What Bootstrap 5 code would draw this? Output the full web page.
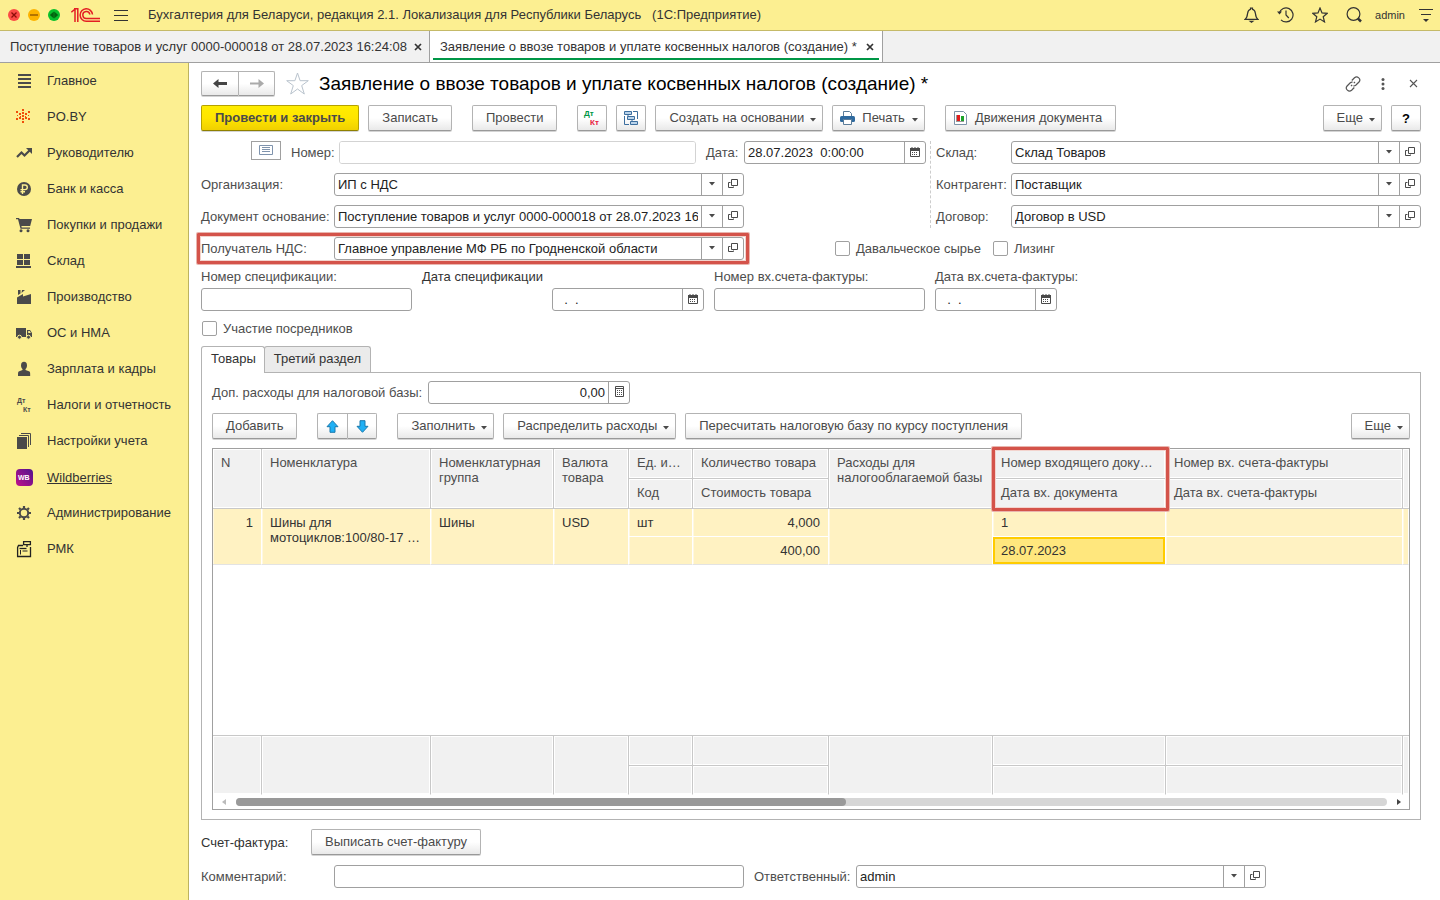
<!DOCTYPE html>
<html lang="ru">
<head>
<meta charset="utf-8">
<meta name="viewport" content="width=device-width, initial-scale=1">
<title>Заявление о ввозе товаров и уплате косвенных налогов</title>
<link href="https://cdn.jsdelivr.net/npm/bootstrap@5.3.0/dist/css/bootstrap.min.css" rel="stylesheet">
<style>
  body { font: 13px/15px "Liberation Sans", Arial, sans-serif; color: #333; background: #fff; }
  button, input { font: inherit; color: inherit; }
  svg { display: block; flex: none; }

  .topbar { height: 31px; background: #fcef91; border-bottom: 1px solid #c5ba68; padding: 0 7px 0 8px; }
  .topbar button, .plain { border: 0; background: none; padding: 0; color: #333; }
  .brand { margin: 0 14px 0 11px; }
  .apptitle { padding: 0 0 2px 20px; }
  .account { font-size: 11px; color: #333; text-decoration: none; margin: 0 14px 0 13px; }
  .wintabs { height: 32px; background: #f1f1f1; border-bottom: 1px solid #a0a0a0; }
  .wintab { height: 31px; padding: 0 7px 0 10px; border-right: 1px solid #a0a0a0; gap: 7px; }
  .wintab a { color: #333; text-decoration: none; }
  .wintab.current { background: #fff; position: relative; padding-right: 8px; gap: 9px; }
  .wintab.current::after { content: ""; position: absolute; left: 3px; right: 3px; bottom: 2px; height: 2px; background: #009646; }

  .sidebar { width: 189px; flex: none; background: #fcef91; border-right: 1px solid #bdb35f; }
  .sidebar a { height: 36px; padding-left: 15px; gap: 14px; color: #333; text-decoration: none; }
  .sidebar a svg { color: #4a4a4a; width: 18px; height: 18px; }
  .sidebar a span { padding-bottom: 2px; }
  .sidebar a.hovered span { text-decoration: underline; padding-bottom: 0; }

  .workarea { padding: 8px 19px 12px 12px; min-width: 0; }
  h1 { font-size: 19px; line-height: 25px; color: #000; font-weight: 400; margin: 0; }
  .star { margin: 0 10px 0 11px; }
  .wintools { gap: 20px; padding-right: 3px; }

  .cmd { height: 26px; padding: 0 13px 2px; border: 1px solid #b3b3b3; border-bottom-color: #999; border-radius: 2px;
         background: linear-gradient(#fff 50%, #e9e9e9); box-shadow: 0 1px 0 #d4d4d4; color: #4a4a4a;
         font-size: 13px; line-height: 15px; display: inline-flex; align-items: center; justify-content: center; gap: 6px; white-space: nowrap; }
  .cmd:hover { border-color: #999; color: #333; }
  .cmd.main-cmd { background: linear-gradient(#ffed00, #ffe500 50%, #f0d000); border-color: #b5a100; border-bottom-color: #8f8000; font-weight: 700; }
  .cmd.dropdown-cmd { padding-right: 6px; }
  .cmd .drop { margin-top: 6px; }
  .cmd.square { width: 30px; padding: 0; }
  .cmd.with-icon { padding-left: 7px; gap: 7px; }
  .cmd.with-icon svg:first-child { margin-top: 2px; }
  .cmd.pair-l { border-radius: 2px 0 0 2px; border-right: 0; }
  .cmd.pair-r { border-radius: 0 2px 2px 0; }
  .tools { gap: 9px; margin-top: 9px; }
  .apart { margin-left: 11px; }
  .navpair .cmd { height: 25px; width: 37px; padding: 0; }

  .lbl { color: #4d4d4d; white-space: nowrap; }
  .lbl.strong-ink { color: #333; }
  .fld { display: flex; height: 23px; border: 1px solid #a0a0a0; border-radius: 3px; background: #fff; overflow: hidden; min-width: 0; }
  .fld input { flex: 1; min-width: 0; width: 0; border: 0; padding: 0 3px; background: none; outline: 0; color: #222; white-space: pre; }
  .fld input:disabled { background: #fff; }
  .fld.off { border-color: #d3d3d3; }
  .fld button { width: 21px; flex: none; border: 0; border-left: 1px solid #a0a0a0; background: none; padding: 0 0 1px; color: #4a4a4a; display: flex; align-items: center; justify-content: center; }
  .fld:focus-within { border-color: #808080; }

  .header-grid { display: grid; grid-template-columns: 133px minmax(0,410fr) minmax(0,182fr) 10px 75px minmax(0,410fr); grid-auto-rows: 23px; row-gap: 9px; align-items: center; margin-top: 10px; position: relative; }
  .header-grid .number-part { grid-column: 1 / 3; padding-left: 50px; }
  .number-part .lbl { padding-left: 10px; width: 48px; }
  .number-part .listbtn + .lbl { width: 58px; }
  .header-grid .divider { grid-area: 1 / 4 / 4 / 5; align-self: stretch; margin-left: 4px; border-left: 1px dashed #ccc; }
  .header-grid .checks { grid-column: 3 / 7; padding-left: 91px; gap: 12px; }
  .r1c5 { grid-area: 1 / 5; } .r1c6 { grid-area: 1 / 6; }
  .r2c1 { grid-area: 2 / 1; } .r2c2 { grid-area: 2 / 2; } .r2c5 { grid-area: 2 / 5; } .r2c6 { grid-area: 2 / 6; }
  .r3c1 { grid-area: 3 / 1; } .r3c2 { grid-area: 3 / 2; } .r3c5 { grid-area: 3 / 5; } .r3c6 { grid-area: 3 / 6; }
  .r4c1 { grid-area: 4 / 1; } .r4c2 { grid-area: 4 / 2; }
  .listbtn { width: 30px; height: 19px; border: 1px solid #a0a0a0; background: #fff; padding: 0 0 1px; display: flex; align-items: center; justify-content: center; margin-bottom: 4px; }
  .frame { position: absolute; border: 3px solid #d4534a; box-shadow: 0 0 0 1px #e9b5ae, inset 0 0 0 1px #f3d3cd; pointer-events: none; border-radius: 1px; }
  .frame.row-frame { grid-area: 4 / 1 / 5 / 3; inset: -4px -5px -4px -4px; }
  .frame.head-frame { top: -2px; left: -1px; right: -4px; height: 64px; z-index: 2; }

  .tick { gap: 6px; color: #4d4d4d; }
  .tick .form-check-input { width: 15px; height: 15px; margin: 0; border: 1px solid #a0a0a0; border-radius: 2px; }
  .tick.mediator { margin: 10px 0 0 1px; }

  .spec-grid { display: grid; grid-template-columns: minmax(0,211fr) minmax(0,282fr) minmax(0,211fr) minmax(0,122fr) minmax(0,354fr); column-gap: 10px; margin-top: 9px; }
  .spec-grid label { line-height: 16px; margin-bottom: 3px; display: block; }
  .spec-grid .spec-date { width: 152px; margin-left: auto; }

  .pagetabs { margin-top: 10px; border: 0; }
  .pagetabs .nav-link { height: 26px; padding: 0 9px 2px; border: 1px solid #b3b3b3; border-bottom: 0; border-radius: 3px 3px 0 0; color: #333; background: #ebebeb; margin: 0 0 0 -1px; }
  .pagetabs .nav-link.active { background: #fff; color: #333; height: 27px; margin: 0 0 -1px; position: relative; padding: 0 8px 3px 9px; border-color: #b3b3b3; }
  .pagebox { border: 1px solid #b3b3b3; padding: 8px 10px 9px; }
  .extra-lbl { width: 216px; }
  .extra-fld { width: 202px; }

  .gridbox { border: 1px solid #a0a0a0; margin-top: 9px; min-height: 200px; }
  .gridbox table { table-layout: fixed; width: 100%; border-collapse: separate; border-spacing: 0; }
  .gridbox th, .gridbox td { vertical-align: top; padding: 6px 8px 0; font-weight: 400; }
  .gridbox th, .totals td { background: #f1f1f1; color: #4d4d4d; border-right: 1px solid #c8c8c8; border-bottom: 1px solid #c8c8c8; box-shadow: inset 0 0 0 1px #fff; height: 30px; }
  .gridbox tbody.rows td { background: #fff2c2; border-right: 1px solid #fff; border-bottom: 1px solid #fff; height: 28px; box-shadow: inset 1px 0 0 #fff8e0; }
  .gridbox tbody.rows td.low { border-bottom-color: #e3e3e3; }
  .gridbox tr > .edge { border-right: 0; padding: 0; }
  .gridbox tbody.rows td.focused { background: #ffe77d; box-shadow: inset 0 0 0 2px #fc0; }
  .w-n { width: 49px; } .w-item { width: 169px; } .w-group { width: 123px; } .w-cur { width: 75px; } .w-unit { width: 64px; }
  .w-qty { width: 136px; } .w-exp { width: 164px; } .w-in { width: 173px; } .w-inv { width: 237px; }
  .totals { border-top: 1px solid #c8c8c8; }
  .totals td.low { border-bottom-color: #fff; height: 29px; }
  .hbar { height: 14px; padding: 0 8px 0 9px; gap: 10px; }
  .hbar .track { height: 8px; border-radius: 4px; background: #d6d6d6; }
  .hbar .thumb { height: 8px; border-radius: 4px; background: #999; width: 53%; }

  .invoice-row { margin-top: 9px; }
  .invoice-row .lbl { width: 110px; }
  .foot-grid { display: grid; grid-template-columns: 133px minmax(0,410fr) 112px minmax(0,410fr) minmax(0,155fr); align-items: center; margin-top: 10px; }
  .resp-lbl { padding-left: 10px; }
</style>
</head>
<body class="d-flex flex-column min-vh-100">

<svg width="0" height="0" class="position-absolute" aria-hidden="true">
  <symbol id="i-caret" viewBox="0 0 6 4"><path d="M0 0h6L3 3.5z" fill="currentColor"/></symbol>
  <symbol id="i-open" viewBox="0 0 10 10"><path d="M3.500.5h6v6h-6zM2.500 3.500H.5v5h5V7.500" fill="none" stroke="currentColor"/></symbol>
  <symbol id="i-cal" viewBox="0 0 10 10"><path d="M.5 2h9v7.500h-9z" fill="none" stroke="currentColor"/><path d="M0 1h10v3H0zM1.500 0h1v1h-1zM4.500 0h1v1h-1zM7.500 0h1v1h-1zM2 5h1v1H2zM4 5h1v1H4zM6 5h1v1H6zM2 7h1v1H2zM4 7h1v1H4zM6 7h1v1H6z" fill="currentColor"/></symbol>
  <symbol id="i-calc" viewBox="0 0 9 12"><path d="M.5.5h8v10h-8zM0 2.500h9" fill="none" stroke="currentColor"/><path d="M2 4h1v1H2zM4 4h1v1H4zM6 4h1v1H6zM2 6h1v1H2zM4 6h1v1H4zM6 6h1v1H6zM2 8h1v1H2zM4 8h1v1H4zM6 8h1v1H6z" fill="currentColor"/></symbol>
  <symbol id="i-x" viewBox="0 0 8 8"><path d="M1 1l6 6M7 1L1 7" stroke="currentColor" stroke-width="1.700"/></symbol>
</svg>

<header class="topbar d-flex align-items-center">
  <svg width="52" height="12" viewBox="0 0 52 12">
    <circle cx="6" cy="6" r="6" fill="#fb4b46"/><path d="M3.500 3.500l5 5M8.500 3.500l-5 5" stroke="#8c0d0a" stroke-width="1.300"/>
    <circle cx="26" cy="6" r="6" fill="#fdb300"/><path d="M22 6h8" stroke="#a06400" stroke-width="1.600"/>
    <circle cx="46" cy="6" r="6" fill="#08c02c"/><path d="M45.800 2.500v7L41.800 6zM46.200 2.500L50.200 6l-4 3.500z" fill="#03630f"/>
  </svg>
  <svg class="brand" width="29" height="15" viewBox="0 0 29 15" fill="none" stroke="#e31e24" stroke-width="1.500">
    <path d="M.3 4.200L4 1.200v12.700M3 .8h3.800v13.100"/>
    <path d="M21.500 6.500A6.200 6.200 0 1 0 15.300 13.200H29M18.800 6.500A3.500 3.500 0 1 0 15.500 10.500H29"/>
  </svg>
  <button type="button" aria-label="Меню"><svg width="14" height="13" viewBox="0 0 14 13" stroke="#333"><path d="M0 1.500h14M0 6.500h14M0 11.500h14"/></svg></button>
  <div class="apptitle flex-grow-1 text-nowrap">Бухгалтерия для Беларуси, редакция 2.1. Локализация для Республики Беларусь&nbsp;&nbsp; (1С:Предприятие)</div>
  <div class="d-flex align-items-center" style="gap:18px">
    <button type="button" aria-label="Оповещения"><svg width="15" height="16" viewBox="0 0 15 16" fill="none" stroke="#333" stroke-width="1.200"><path d="M1 12.400c2-1.500 2.300-3 2.600-6C3.900 3.800 5 2.600 6.500 2.300V1.200h2v1.100c1.500.3 2.600 1.500 2.900 4.100.3 3 .6 4.500 2.600 6z"/><path d="M4.500 13.800h6L7.500 16z" fill="#333" stroke="none"/></svg></button>
    <button type="button" aria-label="История"><svg width="17" height="16" viewBox="0 0 17 16" fill="none" stroke="#333" stroke-width="1.200"><path d="M2.300 6A7 7 0 1 1 4 12.800M9 3.500V8l2.800 3"/><path d="M0 4.500h5L2.500 7.500z" fill="#333" stroke="none"/></svg></button>
    <button type="button" aria-label="Избранное"><svg width="16" height="16" viewBox="0 0 16 16" fill="none" stroke="#333" stroke-width="1.200"><path d="M8 1l2 4.900 5.200.4-4 3.400 1.300 5.200L8 12.100l-4.500 2.800 1.300-5.200-4-3.400L6 5.900z"/></svg></button>
    <button type="button" aria-label="Поиск"><svg width="16" height="16" viewBox="0 0 16 16" fill="none" stroke="#333"><circle cx="7.500" cy="7" r="6.400" stroke-width="1.200"/><path d="M11.800 11.300l3.200 3.200" stroke-width="2.500"/></svg></button>
  </div>
  <a class="account" href="#">admin</a>
  <button type="button" aria-label="Настройка"><svg width="14" height="14" viewBox="0 0 14 14"><path d="M0 1.500h14M2 6.500h10" stroke="#333"/><path d="M4 11h6L7 14z" fill="#333"/></svg></button>
</header>

<nav class="wintabs d-flex">
  <div class="wintab d-flex align-items-center"><a href="#">Поступление товаров и услуг 0000-000018 от 28.07.2023 16:24:08</a><button class="plain" type="button" aria-label="Закрыть"><svg width="8" height="8"><use href="#i-x"/></svg></button></div>
  <div class="wintab current d-flex align-items-center"><a href="#">Заявление о ввозе товаров и уплате косвенных налогов (создание) *</a><button class="plain" type="button" aria-label="Закрыть"><svg width="8" height="8"><use href="#i-x"/></svg></button></div>
</nav>

<div class="d-flex flex-grow-1">
  <nav class="sidebar d-flex flex-column">
    <a class="d-flex align-items-center" href="#"><svg viewBox="0 0 18 18"><path d="M3 2h13v2H3zM3 6h13v2H3zM3 10h13v2H3zM3 14h13v2H3z" fill="currentColor"/></svg><span>Главное</span></a>
    <a class="d-flex align-items-center" href="#"><svg viewBox="0 0 18 18"><path d="M7 1h2v2H7zM7 4h2v2H7zM7 7h2v2H7zM7 10h2v2H7zM7 13h2v2H7zM1 3h2v2H1zM13 3h2v2h-2zM4 5h2v2H4zM10 5h2v2h-2zM5 8h1v1H5zM10 8h1v1h-1zM2 7h1v1H2zM13 7h1v1h-1zM4 9h2v2H4zM10 9h2v2h-2zM1 10h2v2H1zM13 10h2v2h-2z" fill="#f04e0a"/></svg><span>PO.BY</span></a>
    <a class="d-flex align-items-center" href="#"><svg viewBox="0 0 18 18"><path d="M2 13l4.500-4.500 3 3L15 6" fill="none" stroke="currentColor" stroke-width="2.200"/><path d="M11 4h6v6z" fill="currentColor"/></svg><span>Руководителю</span></a>
    <a class="d-flex align-items-center" href="#"><svg viewBox="0 0 18 18"><circle cx="9" cy="9" r="7" fill="currentColor"/><path d="M7.500 14V5H10a2.300 2.300 0 0 1 0 4.600H5.500M5.500 11.700H10" fill="none" stroke="#fcef91" stroke-width="1.400"/></svg><span>Банк и касса</span></a>
    <a class="d-flex align-items-center" href="#"><svg viewBox="0 0 18 18" fill="currentColor"><path d="M1 2h3l.6 1H17l-1.800 7H6.400l.3 1.500H15v1.300H5.500L3 3.300H1z"/><circle cx="6" cy="14.700" r="1.500"/><circle cx="13" cy="14.700" r="1.500"/></svg><span>Покупки и продажи</span></a>
    <a class="d-flex align-items-center" href="#"><svg viewBox="0 0 18 18"><path d="M2 2h6v5H2zM9 2h6v5H9zM2 8h6v5H2zM9 8h6v5H9zM1 14h15v2H1z" fill="currentColor"/></svg><span>Склад</span></a>
    <a class="d-flex align-items-center" href="#"><svg viewBox="0 0 18 18"><path d="M2 16V9.500l6-3.500v2.500L16 6v10zM3 2h2.500v3.500L3 7zM7 2h3L6.500 5z" fill="currentColor"/></svg><span>Производство</span></a>
    <a class="d-flex align-items-center" href="#"><svg viewBox="0 0 18 18"><path d="M1 4h10v9H1zM12 6h3l2 3v4h-5z" fill="currentColor"/><path d="M13.200 7h1.500l1.200 2h-2.700z" fill="#fcef91"/><g fill="currentColor" stroke="#fcef91"><circle cx="4.500" cy="13.200" r="2"/><circle cx="13.500" cy="13.200" r="2"/></g></svg><span>ОС и НМА</span></a>
    <a class="d-flex align-items-center" href="#"><svg viewBox="0 0 18 18" fill="currentColor"><ellipse cx="9" cy="5.500" rx="3" ry="3.700"/><path d="M7.500 8h3v2l4 1.500c.7.500.7 2 .7 4.500H3c0-2.500 0-4 .7-4.500l3.800-1.500z"/></svg><span>Зарплата и кадры</span></a>
    <a class="d-flex align-items-center" href="#"><svg viewBox="0 0 18 18" fill="currentColor" font-size="7" font-weight="700"><text x="2" y="7">Дт</text><text x="8" y="16">Кт</text></svg><span>Налоги и отчетность</span></a>
    <a class="d-flex align-items-center" href="#"><svg viewBox="0 0 18 18"><path d="M2 5h10v12H2z" fill="currentColor"/><path d="M4 3.500h9.500V15M6 1.500h9.500V13" fill="none" stroke="currentColor"/></svg><span>Настройки учета</span></a>
    <a class="d-flex align-items-center hovered" href="#"><svg viewBox="0 0 18 18"><defs><linearGradient id="wb" x1="0" y1="1" x2="1" y2="0"><stop stop-color="#c0108a"/><stop offset="1" stop-color="#50128e"/></linearGradient></defs><rect x="1" y="1" width="17" height="17" rx="4" fill="url(#wb)"/><text x="3" y="12" font-size="7" font-weight="700" fill="#fff">WB</text></svg><span>Wildberries</span></a>
    <a class="d-flex align-items-center" href="#"><svg viewBox="0 0 18 18" fill="none" stroke="currentColor"><circle cx="9" cy="9" r="4.200" stroke-width="2"/><path d="M9 4V2M9 16v-2M4 9H2M16 9h-2M5.500 5.500L4 4M14 14l-1.500-1.500M5.500 12.500L4 14M14 4l-1.500 1.500" stroke-width="2.200"/></svg><span>Администрирование</span></a>
    <a class="d-flex align-items-center" href="#"><svg viewBox="0 0 18 18" fill="none" stroke="#222" stroke-width="1.300"><path d="M8 5.500H3.500L2.600 7.500v9h12.900V7M8.600 1.700h6.800v3H8.600zM12 5v2"/><path d="M4.500 8.500h7"/><path d="M5.500 10v4.500M7.500 11h5" stroke-width="1"/></svg><span>РМК</span></a>
  </nav>

  <main class="workarea flex-grow-1 d-flex flex-column">
    <div class="d-flex align-items-center">
      <div class="navpair d-flex">
        <button class="btn cmd pair-l" type="button" aria-label="Назад"><svg width="14" height="9" viewBox="0 0 14 9"><path d="M0 4.500L5.500 0v3H14v3H5.500v3z" fill="#444"/></svg></button>
        <button class="btn cmd pair-r" type="button" aria-label="Вперед"><svg width="14" height="9" viewBox="0 0 14 9"><path d="M14 4.500L8.500 0v3.500H0v2h8.500V9z" fill="#aaa"/></svg></button>
      </div>
      <button class="plain star" type="button" aria-label="В избранное"><svg width="23" height="23" viewBox="0 0 23 23" fill="none" stroke="#b9c3cd"><path d="M11.500 1l2.600 7.700h8.200l-6.600 4.900 2.600 8.400-6.800-5-6.800 5 2.600-8.400L.7 8.700h8.200z"/></svg></button>
      <h1 class="flex-grow-1">Заявление о ввозе товаров и уплате косвенных налогов (создание) *</h1>
      <div class="wintools d-flex align-items-center">
        <button class="plain" type="button" aria-label="Ссылка"><svg width="16" height="16" viewBox="0 0 16 16" fill="none" stroke="#555" stroke-width="1.200"><path d="M6.800 4.500l2.700-2.700c2.800-2.600 7 1.300 4.500 4.200l-3.300 3.200c-.8.700-1.500.8-2.300.6M9.300 11.500l-2.700 2.700c-2.800 2.600-7-1.300-4.500-4.200l3.200-3.200c.8-.7 1.500-.8 2.300-.6M6 10l1.200-1.200M8.800 7.200L10 6"/></svg></button>
        <button class="plain" type="button" aria-label="Еще"><svg width="4" height="12" viewBox="0 0 4 12" fill="#555"><circle cx="2" cy="1.500" r="1.500"/><circle cx="2" cy="6" r="1.500"/><circle cx="2" cy="10.500" r="1.500"/></svg></button>
        <button class="plain ms-1" type="button" aria-label="Закрыть"><svg width="9" height="9" viewBox="0 0 9 9"><path d="M1 1l7 7M8 1L1 8" stroke="#555" stroke-width="1.100"/></svg></button>
      </div>
    </div>

    <div class="tools d-flex">
      <button class="btn cmd main-cmd" type="button">Провести и закрыть</button>
      <button class="btn cmd" type="button">Записать</button>
      <button class="btn cmd apart" type="button">Провести</button>
      <button class="btn cmd square apart" type="button" aria-label="Дт Кт"><svg width="18" height="18" viewBox="0 0 18 18" font-size="8" font-weight="700"><text x="1" y="7" fill="#009646">Дт</text><text x="7" y="16" fill="#e8213b">Кт</text></svg></button>
      <button class="btn cmd square" type="button" aria-label="Структура подчиненности"><svg width="16" height="16" viewBox="0 0 16 16" fill="#b9d3ea" stroke="#3c6e9f"><path d="M1.500 1.500h7v3h-7zM4.500 6.500h7v3h-7zM7.500 11.500h7v3h-7z"/><path d="M10 1.500h4.500V9M1.500 6v8.500H6M5 4.500v2M9 9.500v2" fill="none"/></svg></button>
      <button class="btn cmd dropdown-cmd" type="button">Создать на основании<svg width="6" height="4" class="drop"><use href="#i-caret"/></svg></button>
      <button class="btn cmd dropdown-cmd with-icon" type="button"><svg width="15" height="14" viewBox="0 0 15 14"><path d="M3.500 6V.5h6l2 2V6" fill="#fff" stroke="#5b7c99"/><rect x="0" y="5" width="15" height="6" rx="1.500" fill="#2f6a9f"/><path d="M3.500 8.500h8v5h-8z" fill="#fff" stroke="#5b7c99"/></svg>Печать<svg width="6" height="4" class="drop"><use href="#i-caret"/></svg></button>
      <button class="btn cmd with-icon apart" type="button"><svg width="15" height="14" viewBox="0 0 15 14"><path d="M1.500.5h9l3 3v10h-12z" fill="#fff" stroke="#7d93a8"/><path d="M3.500 4v7M3 10.500h8" stroke="#999"/><path d="M4 4h3v6H4z" fill="#e21b1b"/><path d="M8 5h3v5H8z" fill="#1ba32a"/></svg>Движения документа</button>
      <button class="btn cmd dropdown-cmd ms-auto" type="button">Еще<svg width="6" height="4" class="drop"><use href="#i-caret"/></svg></button>
      <button class="btn cmd square fw-bold text-black" type="button">?</button>
    </div>

    <div class="header-grid">
      <div class="number-part d-flex align-items-center">
        <button class="listbtn" type="button" aria-label="Список"><svg width="14" height="10" viewBox="0 0 14 10" fill="none" stroke="#7f93ad"><path d="M.5.5h13v9H.5zM3 2.500h8M3 4.500h8M3 6.500h8"/></svg></button>
        <label class="lbl" for="num">Номер:</label>
        <div class="fld off flex-grow-1"><input id="num" disabled></div>
        <label class="lbl" for="dt">Дата:</label>
      </div>
      <div class="fld"><input id="dt" value="28.07.2023  0:00:00"><button type="button" aria-label="Календарь"><svg width="10" height="10"><use href="#i-cal"/></svg></button></div>
      <div class="divider"></div>
      <label class="lbl r1c5" for="wh">Склад:</label>
      <div class="fld r1c6"><input id="wh" value="Склад Товаров"><button type="button" aria-label="Выбрать"><svg width="6" height="4"><use href="#i-caret"/></svg></button><button type="button" aria-label="Открыть"><svg width="10" height="10"><use href="#i-open"/></svg></button></div>

      <label class="lbl r2c1" for="org">Организация:</label>
      <div class="fld r2c2"><input id="org" value="ИП с НДС"><button type="button" aria-label="Выбрать"><svg width="6" height="4"><use href="#i-caret"/></svg></button><button type="button" aria-label="Открыть"><svg width="10" height="10"><use href="#i-open"/></svg></button></div>
      <label class="lbl r2c5" for="ctr">Контрагент:</label>
      <div class="fld r2c6"><input id="ctr" value="Поставщик"><button type="button" aria-label="Выбрать"><svg width="6" height="4"><use href="#i-caret"/></svg></button><button type="button" aria-label="Открыть"><svg width="10" height="10"><use href="#i-open"/></svg></button></div>

      <label class="lbl r3c1" for="base">Документ основание:</label>
      <div class="fld r3c2"><input id="base" value="Поступление товаров и услуг 0000-000018 от 28.07.2023 16:24:08"><button type="button" aria-label="Выбрать"><svg width="6" height="4"><use href="#i-caret"/></svg></button><button type="button" aria-label="Открыть"><svg width="10" height="10"><use href="#i-open"/></svg></button></div>
      <label class="lbl r3c5" for="agr">Договор:</label>
      <div class="fld r3c6"><input id="agr" value="Договор в USD"><button type="button" aria-label="Выбрать"><svg width="6" height="4"><use href="#i-caret"/></svg></button><button type="button" aria-label="Открыть"><svg width="10" height="10"><use href="#i-open"/></svg></button></div>

      <label class="lbl r4c1" for="vat">Получатель НДС:</label>
      <div class="fld r4c2"><input id="vat" value="Главное управление МФ РБ по Гродненской области"><button type="button" aria-label="Выбрать"><svg width="6" height="4"><use href="#i-caret"/></svg></button><button type="button" aria-label="Открыть"><svg width="10" height="10"><use href="#i-open"/></svg></button></div>
      <div class="checks d-flex">
        <label class="tick d-flex align-items-center"><input class="form-check-input" type="checkbox">Давальческое сырье</label>
        <label class="tick d-flex align-items-center"><input class="form-check-input" type="checkbox">Лизинг</label>
      </div>
      <div class="frame row-frame"></div>
    </div>

    <div class="spec-grid">
      <div><label class="lbl" for="sn">Номер спецификации:</label><div class="fld"><input id="sn"></div></div>
      <div><label class="lbl strong-ink" for="sd">Дата спецификации</label><div class="fld spec-date"><input id="sd" value="  .  ." class="ps-1"><button type="button" aria-label="Календарь"><svg width="10" height="10"><use href="#i-cal"/></svg></button></div></div>
      <div><label class="lbl" for="inn">Номер вх.счета-фактуры:</label><div class="fld"><input id="inn"></div></div>
      <div><label class="lbl" for="ind">Дата вх.счета-фактуры:</label><div class="fld"><input id="ind" value="  .  ." class="ps-1"><button type="button" aria-label="Календарь"><svg width="10" height="10"><use href="#i-cal"/></svg></button></div></div>
    </div>

    <label class="tick mediator d-flex align-items-center align-self-start"><input class="form-check-input" type="checkbox">Участие посредников</label>

    <div class="nav nav-tabs pagetabs" role="tablist">
      <button class="nav-link active" type="button" role="tab">Товары</button>
      <button class="nav-link" type="button" role="tab">Третий раздел</button>
    </div>
    <section class="pagebox flex-grow-1 d-flex flex-column">
      <div class="d-flex align-items-center">
        <label class="lbl extra-lbl" for="extra">Доп. расходы для налоговой базы:</label>
        <div class="fld extra-fld"><input id="extra" class="text-end" value="0,00"><button type="button" aria-label="Калькулятор"><svg width="9" height="12"><use href="#i-calc"/></svg></button></div>
      </div>
      <div class="tools d-flex">
        <button class="btn cmd" type="button">Добавить</button>
        <div class="d-flex apart">
          <button class="btn cmd square pair-l" type="button" aria-label="Вверх"><svg width="13" height="13" viewBox="0 0 13 13"><path d="M6.500.7l5.500 6H9v5.600H4V6.700H1z" fill="#1fb0f5" stroke="#1878ad"/></svg></button>
          <button class="btn cmd square pair-r" type="button" aria-label="Вниз"><svg width="13" height="13" viewBox="0 0 13 13"><path d="M6.500 12.300l5.500-6H9V.7H4v5.600H1z" fill="#1fb0f5" stroke="#1878ad"/></svg></button>
        </div>
        <button class="btn cmd dropdown-cmd apart" type="button">Заполнить<svg width="6" height="4" class="drop"><use href="#i-caret"/></svg></button>
        <button class="btn cmd dropdown-cmd" type="button">Распределить расходы<svg width="6" height="4" class="drop"><use href="#i-caret"/></svg></button>
        <button class="btn cmd" type="button">Пересчитать налоговую базу по курсу поступления</button>
        <button class="btn cmd dropdown-cmd ms-auto" type="button">Еще<svg width="6" height="4" class="drop"><use href="#i-caret"/></svg></button>
      </div>

      <div class="gridbox flex-grow-1 d-flex flex-column">
        <table>
          <colgroup><col class="w-n"><col class="w-item"><col class="w-group"><col class="w-cur"><col class="w-unit"><col class="w-qty"><col class="w-exp"><col class="w-in"><col class="w-inv"><col></colgroup>
          <thead>
            <tr><th rowspan="2">N</th><th rowspan="2">Номенклатура</th><th rowspan="2">Номенклатурная группа</th><th rowspan="2">Валюта товара</th><th class="text-nowrap">Ед. и…</th><th>Количество товара</th><th rowspan="2">Расходы для налогооблагаемой базы</th><th class="position-relative text-nowrap">Номер входящего доку…<div class="frame head-frame"></div></th><th>Номер вх. счета-фактуры</th><th class="edge" rowspan="2"></th></tr>
            <tr><th>Код</th><th>Стоимость товара</th><th>Дата вх. документа</th><th>Дата вх. счета-фактуры</th></tr>
          </thead>
          <tbody class="rows">
            <tr><td class="low text-end" rowspan="2">1</td><td class="low" rowspan="2">Шины для мотоциклов:100/80-17 …</td><td class="low" rowspan="2">Шины</td><td class="low" rowspan="2">USD</td><td>шт</td><td class="text-end">4,000</td><td class="low" rowspan="2"></td><td>1</td><td></td><td class="low edge" rowspan="2"></td></tr>
            <tr><td class="low"></td><td class="low text-end">400,00</td><td class="low focused">28.07.2023</td><td class="low"></td></tr>
          </tbody>
        </table>
        <div class="flex-grow-1"></div>
        <table class="totals">
          <colgroup><col class="w-n"><col class="w-item"><col class="w-group"><col class="w-cur"><col class="w-unit"><col class="w-qty"><col class="w-exp"><col class="w-in"><col class="w-inv"><col></colgroup>
          <tbody>
            <tr><td class="low" rowspan="2"></td><td class="low" rowspan="2"></td><td class="low" rowspan="2"></td><td class="low" rowspan="2"></td><td></td><td></td><td class="low" rowspan="2"></td><td></td><td></td><td class="low edge" rowspan="2"></td></tr>
            <tr><td class="low"></td><td class="low"></td><td class="low"></td><td class="low"></td></tr>
          </tbody>
        </table>
        <div class="hbar d-flex align-items-center">
          <svg width="4" height="6" viewBox="0 0 4 6"><path d="M4 0v6L0 3z" fill="#bbb"/></svg>
          <div class="track flex-grow-1"><div class="thumb"></div></div>
          <svg width="4" height="6" viewBox="0 0 4 6"><path d="M0 0v6l4-3z" fill="#444"/></svg>
        </div>
      </div>
    </section>

    <div class="invoice-row d-flex align-items-center">
      <span class="lbl strong-ink">Счет-фактура:</span>
      <button class="btn cmd" type="button">Выписать счет-фактуру</button>
    </div>
    <div class="foot-grid">
      <label class="lbl" for="note">Комментарий:</label>
      <div class="fld"><input id="note"></div>
      <label class="lbl resp-lbl" for="resp">Ответственный:</label>
      <div class="fld"><input id="resp" value="admin"><button type="button" aria-label="Выбрать"><svg width="6" height="4"><use href="#i-caret"/></svg></button><button type="button" aria-label="Открыть"><svg width="10" height="10"><use href="#i-open"/></svg></button></div>
    </div>
  </main>
</div>
<script src="https://cdn.jsdelivr.net/npm/bootstrap@5.3.0/dist/js/bootstrap.bundle.min.js"></script>
</body>
</html>
